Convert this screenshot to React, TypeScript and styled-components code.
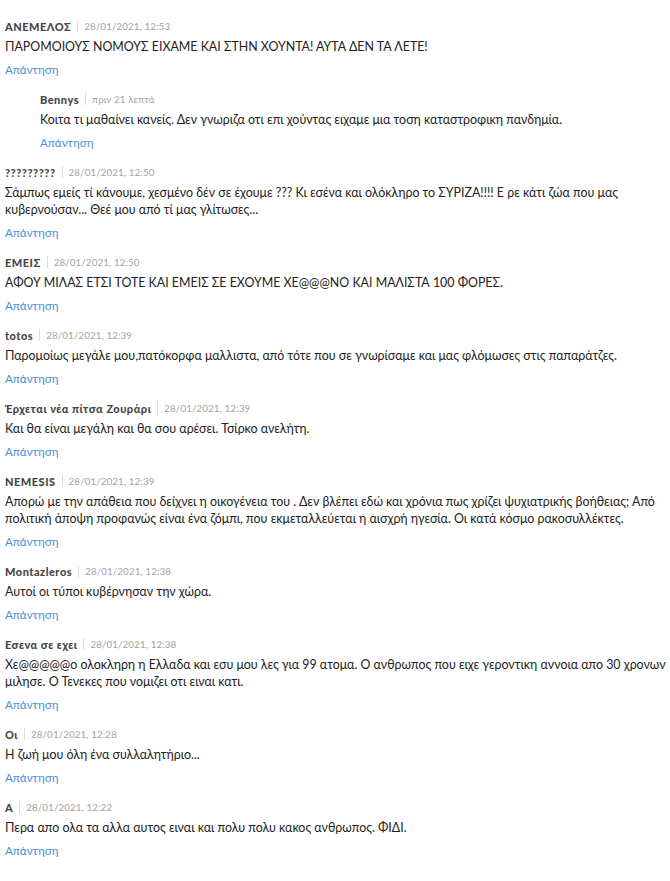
import React from 'react';
import styled, { createGlobalStyle } from 'styled-components';

const GlobalStyle = createGlobalStyle`
  html, body {
    margin: 0;
    padding: 0;
    background: #ffffff;
    overflow: hidden;
  }
  body {
    font-family: Lato, Roboto, sans-serif;
  }
`;

type CommentData = {
  author: string;
  date: string;
  text: string;
  replies?: CommentData[];
};

const comments: CommentData[] = [
  {
    author: 'ΑΝΕΜΕΛΟΣ',
    date: '28/01/2021, 12:53',
    text: 'ΠΑΡΟΜΟΙΟΥΣ ΝΟΜΟΥΣ ΕΙΧΑΜΕ ΚΑΙ ΣΤΗΝ ΧΟΥΝΤΑ! ΑΥΤΑ ΔΕΝ ΤΑ ΛΕΤΕ!',
    replies: [
      {
        author: 'Bennys',
        date: 'πριν 21 λεπτά',
        text: 'Κοιτα τι μαθαίνει κανείς. Δεν γνωριζα οτι επι χούντας ειχαμε μια τοση καταστροφικη πανδημία.',
      },
    ],
  },
  {
    author: '?????????',
    date: '28/01/2021, 12:50',
    text: 'Σάμπως εμείς τί κάνουμε, χεσμένο δέν σε έχουμε ??? Κι εσένα και ολόκληρο το ΣΥΡΙΖΑ!!!! Ε ρε κάτι ζώα που μας κυβερνούσαν... Θεέ μου από τί μας γλίτωσες...',
  },
  {
    author: 'ΕΜΕΙΣ',
    date: '28/01/2021, 12:50',
    text: 'ΑΦΟΥ ΜΙΛΑΣ ΕΤΣΙ ΤΟΤΕ ΚΑΙ ΕΜΕΙΣ ΣΕ ΕΧΟΥΜΕ ΧΕ@@@ΝΟ ΚΑΙ ΜΑΛΙΣΤΑ 100 ΦΟΡΕΣ.',
  },
  {
    author: 'totos',
    date: '28/01/2021, 12:39',
    text: 'Παρομοίως μεγάλε μου,πατόκορφα μαλλιστα, από τότε που σε γνωρίσαμε και μας φλόμωσες στις παπαράτζες.',
  },
  {
    author: 'Έρχεται νέα πίτσα Ζουράρι',
    date: '28/01/2021, 12:39',
    text: 'Και θα είναι μεγάλη και θα σου αρέσει. Τσίρκο ανελήτη.',
  },
  {
    author: 'NEMESIS',
    date: '28/01/2021, 12:39',
    text: 'Απορώ με την απάθεια που δείχνει η οικογένεια του . Δεν βλέπει εδώ και χρόνια πως χρίζει ψυχιατρικής βοήθειας; Από πολιτική άποψη προφανώς είναι ένα ζόμπι, που εκμεταλλεύεται η αισχρή ηγεσία. Οι κατά κόσμο ρακοσυλλέκτες.',
  },
  {
    author: 'Montazleros',
    date: '28/01/2021, 12:38',
    text: 'Αυτοί οι τύποι κυβέρνησαν την χώρα.',
  },
  {
    author: 'Εσενα σε εχει',
    date: '28/01/2021, 12:38',
    text: 'Χε@@@@@ο ολοκληρη η Ελλαδα και εσυ μου λες για 99 ατομα. Ο ανθρωπος που ειχε γεροντικη αννοια απο 30 χρονων μιλησε. Ο Τενεκες που νομιζει οτι ειναι κατι.',
  },
  {
    author: 'Οι',
    date: '28/01/2021, 12:28',
    text: 'Η ζωή μου όλη ένα συλλαλητήριο...',
  },
  {
    author: 'A',
    date: '28/01/2021, 12:22',
    text: 'Περα απο ολα τα αλλα αυτος ειναι και πολυ πολυ κακος ανθρωπος. ΦΙΔΙ.',
  },
];

// the list is a bit wider than the window, long lines run off the right edge
const List = styled.div`
  width: 680px;
  padding: 16px 0 0 5px;
  display: flex;
  flex-direction: column;
`;

const Item = styled.div<{ $nested?: boolean }>`
  display: flex;
  flex-direction: column;
  padding-left: ${(p) => (p.$nested ? '35px' : '0')};
  padding-bottom: 10px;
`;

const Meta = styled.div`
  display: flex;
  align-items: center;
  height: 20px;
  font-size: 9.8px;
`;

const Author = styled.span`
  font-weight: 900;
  font-size: 11px;
  letter-spacing: 0.5px;
  color: #474747;
`;

const Divider = styled.span`
  width: 1px;
  height: 12px;
  background: #dcdcdc;
  margin: 0 6px;
`;

const Stamp = styled.span`
  color: #a3a3a3;
  letter-spacing: 0.1px;
`;

const Body = styled.p`
  margin: 2px 0 0;
  font-size: 12.4px;
  line-height: 17px;
  color: #222222;
`;

const ReplyLink = styled.a`
  margin-top: 6px;
  font-size: 11.6px;
  line-height: 18px;
  color: #4a90d9;
  text-decoration: none;
  cursor: pointer;
  align-self: flex-start;
`;

const Comment = ({ data, nested }: { data: CommentData; nested?: boolean }) => (
  <>
    <Item $nested={nested}>
      <Meta>
        <Author>{data.author}</Author>
        <Divider />
        <Stamp>{data.date}</Stamp>
      </Meta>
      <Body>{data.text}</Body>
      <ReplyLink>Απάντηση</ReplyLink>
    </Item>
    {data.replies?.map((r, i) => (
      <Comment key={i} data={r} nested />
    ))}
  </>
);

const App = () => (
  <>
    <GlobalStyle />
    <List>
      {comments.map((c, i) => (
        <Comment key={i} data={c} />
      ))}
    </List>
  </>
);

export default App;
